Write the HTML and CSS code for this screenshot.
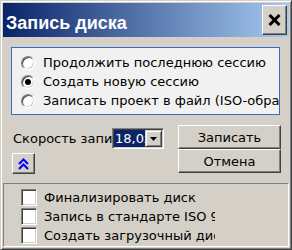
FILE: index.html
```html
<!DOCTYPE html>
<html lang="ru">
<head>
    <meta charset="UTF-8">
    <title>Запись диска</title>
    <link rel="stylesheet" href="styles.css">
</head>
<body>
    <div class="window">
        <div class="titlebar">
            <span class="title">Запись диска</span>
            <button class="close">
                <svg width="13" height="12" viewBox="0 0 13 12"><path d="M1.5 1 L11.5 11 M11.5 1 L1.5 11" stroke="#000" stroke-width="3"/></svg>
            </button>
        </div>
        <div class="content">
            <div class="group">
                <label class="option"><span class="radio"></span>Продолжить последнюю сессию</label>
                <label class="option"><span class="radio checked"></span>Создать новую сессию</label>
                <label class="option"><span class="radio"></span>Записать проект в файл (ISO-образ)</label>
            </div>
            <div class="middle">
                <div class="left">
                    <div class="speed">
                        <span class="speed-label">Скорость записи</span>
                        <div class="combo">
                            <span class="combo-value">18,0x</span>
                            <span class="combo-btn">
                                <svg width="7" height="4" viewBox="0 0 7 4"><path d="M0 0 H7 L3.5 4 Z" fill="#000"/></svg>
                            </span>
                        </div>
                    </div>
                    <button class="btn more">
                        <svg width="11" height="12" viewBox="0 0 11 12"><path d="M1 6 L5.5 1.5 L10 6 M1 11 L5.5 6.5 L10 11" stroke="#0000ff" stroke-width="2" fill="none"/></svg>
                    </button>
                </div>
                <div class="actions">
                    <button class="btn">Записать</button>
                    <button class="btn">Отмена</button>
                </div>
            </div>
        </div>
        <div class="extra">
            <label class="check"><span class="box"></span><span class="check-text">Финализировать диск</span></label>
            <label class="check"><span class="box"></span><span class="check-text">Запись в стандарте ISO 9660</span></label>
            <label class="check"><span class="box"></span><span class="check-text">Создать загрузочный диск</span></label>
        </div>
    </div>
</body>
</html>
```

FILE: styles.css
```css
/* Global */
* {
    box-sizing: border-box;
    margin: 0;
    padding: 0;
}
body {
    font-family: "DejaVu Sans", sans-serif;
    font-size: 13px;
    color: #000;
}

/* Window frame */
.window {
    width: 292px;
    height: 250px;
    display: flex;
    flex-direction: column;
    background: #d4d0c8;
    border: 1px solid;
    border-color: #d4d0c8 #404040 #404040 #d4d0c8;
    box-shadow: inset 1px 1px #fff, inset -1px -1px #808080;
    padding: 2px;
}

/* Title bar */
.titlebar {
    height: 34px;
    display: flex;
    justify-content: space-between;
    align-items: flex-start;
    background: linear-gradient(to right, #0a246a, #a6caf0);
}
.title {
    font-family: "Liberation Sans", sans-serif;
    font-weight: bold;
    font-size: 18px;
    color: #fff;
    padding: 10px 0 0 3px;
    line-height: 20px;
}
.close {
    width: 25px;
    height: 30px;
    margin: 2px 2px 0 0;
    display: flex;
    align-items: center;
    justify-content: center;
    background: #d4d0c8;
    border: 1px solid;
    border-color: #fff #404040 #404040 #fff;
    box-shadow: inset -1px -1px #808080;
}

/* Main area */
.content {
    flex: 1;
    padding: 10px 9px 0 8px;
}
.group {
    background: #f1f1f1;
    border: 1px solid #3a6bc4;
    padding: 5px 0 4px 9px;
    overflow: hidden;
}
.option {
    height: 19px;
    display: flex;
    align-items: center;
    gap: 8px;
    white-space: nowrap;
}
.radio {
    width: 14px;
    height: 14px;
    flex: none;
    position: relative;
    border-radius: 50%;
    background: #fff;
    border: 1px solid;
    border-color: #808080 #fff #fff #808080;
    box-shadow: inset 1px 1px #404040, inset -1px -1px #d4d0c8;
}
.radio.checked::after {
    content: "";
    position: absolute;
    left: 3px;
    top: 3px;
    width: 6px;
    height: 6px;
    border-radius: 50%;
    background: #000;
}

/* Speed row and buttons */
.middle {
    display: flex;
    justify-content: space-between;
    margin-top: 10px;
}
.left {
    margin-left: 1px;
    padding-top: 3px;
}
.speed {
    display: flex;
    align-items: center;
}
.speed-label {
    width: 100px;
    overflow: hidden;
    white-space: nowrap;
    padding-left: 1px;
}
.combo {
    width: 52px;
    height: 21px;
    display: flex;
    background: #fff;
    border: 1px solid;
    border-color: #808080 #fff #fff #808080;
    box-shadow: inset 1px 1px #404040, inset -1px -1px #d4d0c8;
    padding: 1px;
}
.combo-value {
    flex: 1;
    overflow: hidden;
    white-space: nowrap;
    background: #0a246a;
    color: #fff;
    line-height: 17px;
    padding-left: 1px;
}
.combo-btn {
    width: 17px;
    display: flex;
    align-items: center;
    justify-content: center;
    background: #d4d0c8;
    border: 1px solid;
    border-color: #d4d0c8 #404040 #404040 #d4d0c8;
    box-shadow: inset 1px 1px #fff, inset -1px -1px #808080;
}
.btn {
    font-family: "DejaVu Sans", sans-serif;
    font-size: 13px;
    color: #000;
    background: #d4d0c8;
    border: 1px solid;
    border-color: #fff #404040 #404040 #fff;
    box-shadow: inset -1px -1px #808080;
    display: flex;
    align-items: center;
    justify-content: center;
}
.more {
    width: 23px;
    height: 21px;
    margin-top: 4px;
}
.actions {
    width: 103px;
    margin-right: -1px;
    display: flex;
    flex-direction: column;
}
.actions .btn {
    height: 24px;
}

/* Extra options panel */
.extra {
    height: 64px;
    border: 1px solid;
    border-color: #808080 #fff #fff #808080;
    padding: 4px 0 0 17px;
}
.check {
    height: 19px;
    width: 194px;
    display: flex;
    align-items: center;
    gap: 7px;
    overflow: hidden;
    white-space: nowrap;
}
.box {
    width: 16px;
    height: 17px;
    flex: none;
    background: #fff;
    border: 1px solid;
    border-color: #808080 #fff #fff #808080;
    box-shadow: inset 1px 1px #404040, inset -1px -1px #d4d0c8;
}
```
